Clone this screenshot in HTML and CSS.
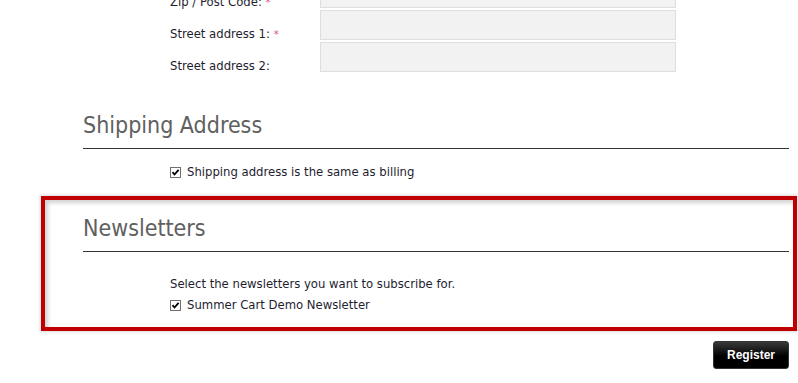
FILE: index.html
```html
<!DOCTYPE html>
<html>
<head>
<meta charset="utf-8">
<link rel="stylesheet" href="styles.css">
</head>
<body>
<div class="page">
  <div class="form-rows">
    <div class="row first">
      <label class="lbl">Zip / Post Code: <span class="req">*</span></label>
      <div class="field"></div>
    </div>
    <div class="row">
      <label class="lbl">Street address 1: <span class="req">*</span></label>
      <div class="field"></div>
    </div>
    <div class="row">
      <label class="lbl">Street address 2:</label>
      <div class="field"></div>
    </div>
  </div>

  <section class="section shipping">
    <h2 class="heading">Shipping Address</h2>
    <div class="body">
      <label class="check">
        <svg class="box" width="11" height="11" viewBox="0 0 11 11"><rect x="0.5" y="0.5" width="10" height="10" fill="#fff" stroke="#707070"/><path d="M2.5 5.2 L4.5 7.5 L8.6 2.8" fill="none" stroke="#000" stroke-width="1.8"/></svg>
        <span>Shipping address is the same as billing</span>
      </label>
    </div>
  </section>

  <section class="section newsletters">
    <h2 class="heading">Newsletters</h2>
    <div class="body">
      <p class="note">Select the newsletters you want to subscribe for.</p>
      <label class="check">
        <svg class="box" width="11" height="11" viewBox="0 0 11 11"><rect x="0.5" y="0.5" width="10" height="10" fill="#fff" stroke="#707070"/><path d="M2.5 5.2 L4.5 7.5 L8.6 2.8" fill="none" stroke="#000" stroke-width="1.8"/></svg>
        <span>Summer Cart Demo Newsletter</span>
      </label>
    </div>
  </section>

  <div class="actions">
    <button class="btn">Register</button>
  </div>
</div>
</body>
</html>
```

FILE: styles.css
```css
* { box-sizing: border-box; }
html, body { margin: 0; padding: 0; background: #fff; }
body {
  font-family: "DejaVu Sans", Verdana, sans-serif;
  font-size: 11.67px;
  color: #1e1e30;
  overflow: hidden;
}
.page {
  width: 789px;
  padding-left: 83px;
}
.form-rows {
  margin-top: -22px;
  padding-left: 87px;
  display: flex;
  flex-direction: column;
  gap: 2px;
}
.row {
  display: flex;
  align-items: center;
  height: 30px;
}
.lbl {
  width: 150px;
  padding-top: 18px;
  line-height: 14px;
}
.req { color: #e0508a; font-size: 10px; }
.field {
  width: 356px;
  height: 30px;
  background: #f2f2f2;
  border: 1px solid #dedede;
}
.shipping { margin-top: 36px; }
.heading {
  margin: 0;
  font-family: "DejaVu Sans Condensed", "DejaVu Sans", sans-serif;
  font-stretch: condensed;
  font-weight: normal;
  font-size: 23px;
  line-height: 34px;
  color: #606060;
  padding-bottom: 6px;
  border-bottom: 1px solid #333;
}
.body {
  padding-left: 87px;
}
.shipping .body { padding-top: 15px; }
.check {
  display: flex;
  align-items: center;
  gap: 6px;
  line-height: 16px;
}
.box { flex: none; }
.newsletters {
  margin-top: 16px;
  margin-left: -42px;
  margin-right: -8px;
  padding: 11px 4px 14px 38px;
  border: 4px solid #c00000;
  box-shadow: 0 0 3px 1px rgba(0,0,0,0.15), inset 3px 3px 4px rgba(0,0,0,0.18);
}
.newsletters .heading { padding-bottom: 6px; }
.newsletters .body { padding-top: 24px; }
.note { margin: 0 0 5px; line-height: 16px; }
.actions {
  display: flex;
  justify-content: flex-end;
  margin-top: 10px;
}
.btn {
  width: 76px;
  height: 28px;
  border: 1px solid #333;
  border-radius: 3px;
  background: linear-gradient(#3a3a3a, #000 55%);
  color: #fff;
  font-family: "Liberation Sans", Arial, sans-serif;
  font-weight: bold;
  font-size: 12px;
  padding: 0;
}
```
